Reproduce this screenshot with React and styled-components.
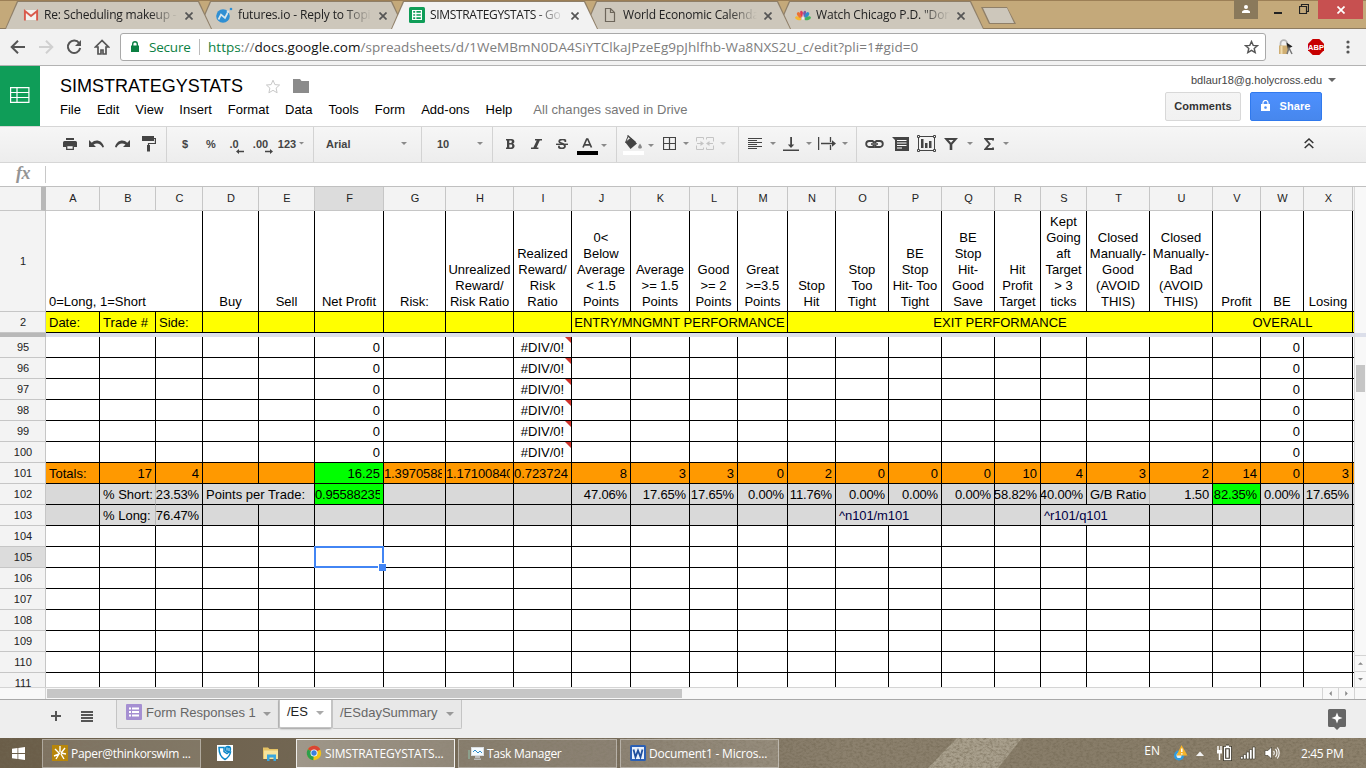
import React from "react";
import styled, { createGlobalStyle } from "styled-components";

const GlobalStyle = createGlobalStyle`
  body { margin: 0; background: #fff; font-family: "Liberation Sans", Arial, sans-serif; }
  * { box-sizing: border-box; }
  svg { display: block; flex: none; }
`;

const uiFont = `"Open Sans", "Noto Sans", sans-serif`;

const Screen = styled.div`
  width: 1366px;
  height: 768px;
  display: flex;
  flex-direction: column;
  overflow: hidden;
  white-space: nowrap;
`;

/* ---------- browser frame ---------- */

const TabStrip = styled.div`
  height: 29px;
  display: flex;
  align-items: flex-start;
  background: #c4a97a;
  border-top: 1px solid #9c7f56;
  border-bottom: 1px solid #8d7b60;
  padding-left: 5px;
  position: relative;
`;

const Tab = styled.div`
  width: 207px;
  height: 28px;
  margin-right: -14px;
  padding: 0 16px 0 18px;
  display: flex;
  align-items: center;
  position: relative;
  z-index: ${(p) => p.$z};
  isolation: isolate;
  font: 12px ${uiFont};
  color: #222;
  &::before, &::after { content: ""; position: absolute; inset: 0; z-index: -1; }
  &::before {
    background: #8f7f68;
    clip-path: polygon(0 100%, 12px 0, 194px 0, 100% 100%);
  }
  &::after {
    background: ${(p) => (p.$active ? "#f2f2f2" : "#cdc7bb")};
    clip-path: polygon(1px 100%, 13px 1px, 193px 1px, 206px 100%);
  }
`;

const TabTitle = styled.span`
  margin: -1px 0 0 5px;
  width: 135px;
  overflow: hidden;
  letter-spacing: ${(p) => p.$ls || 0}px;
  mask-image: linear-gradient(90deg, #000 105px, transparent 134px);
`;

const TabClose = styled.span`
  margin: 1px 0 0 6px;
`;

const NewTab = styled.div`
  width: 35px;
  height: 17px;
  margin: 6px 0 0 11px;
  background: #8f7f68;
  clip-path: polygon(0 0, 26px 0, 100% 100%, 8px 100%);
  &::after {
    content: "";
    display: block;
    height: 17px;
    background: #cdc7bb;
    clip-path: polygon(2px 1px, 26px 1px, 33px 16px, 9px 16px);
  }
`;

const WindowButtons = styled.div`
  display: flex;
  align-items: flex-start;
  margin-left: auto;
  margin-right: 3px;
  margin-top: -1px;
`;

const WindowButton = styled.div`
  width: ${(p) => p.$w}px;
  height: 19px;
  margin-left: ${(p) => p.$gap || 0}px;
  background: ${(p) => p.$bg || "transparent"};
  display: flex;
  align-items: center;
  justify-content: center;
`;

const AddressBar = styled.div`
  height: 37px;
  background: #f2f2f2;
  border-bottom: 1px solid #b3b3b3;
  display: flex;
  align-items: center;
  padding: 0 0 0 10px;
`;

const NavButton = styled.div`
  width: ${(p) => p.$w || 28}px;
  height: 28px;
  display: flex;
  align-items: center;
  justify-content: ${(p) => p.$align || "flex-start"};
`;

const UrlBox = styled.div`
  width: 1146px;
  height: 28px;
  margin-left: -2px;
  border: 1px solid #a9a9a9;
  border-radius: 3px;
  background: #fff;
  display: flex;
  align-items: center;
  padding: 0 6px 0 10px;
  font: 13.5px ${uiFont};
  color: #7d7d7d;
`;

const SecureLabel = styled.span`
  margin-left: 10px;
  width: 51px;
  border-right: 1px solid #bbb;
  color: #0b8043;
  line-height: 16px;
  letter-spacing: -0.2px;
`;

const Url = styled.span`
  margin-left: 8px;
  flex: 1;
  letter-spacing: 0.05px;
  b { font-weight: 400; color: #111; }
  i { font-style: normal; color: #0b8043; }
`;

/* ---------- document header ---------- */

const DocHeader = styled.header`
  height: 60px;
  display: flex;
  background: #fff;
`;

const SheetsLogo = styled.div`
  width: 40px;
  height: 60px;
  background: #0f9d58;
  display: flex;
  align-items: center;
  justify-content: center;
  padding-bottom: 2px;
`;

const DocInfo = styled.div`
  margin-left: 20px;
  flex: 1;
  padding-top: 10px;
`;

const TitleRow = styled.div`
  display: flex;
  align-items: center;
  height: 20px;
  gap: 12px;
`;

const DocTitle = styled.div`
  width: 193px;
  font-size: 18px;
  color: #000;
`;

const MenuBar = styled.nav`
  display: flex;
  gap: 16px;
  margin-top: 6px;
  font-size: 13px;
  line-height: 16px;
  color: #000;
`;

const SaveState = styled.span`
  margin-left: 5px;
  color: #777;
  letter-spacing: 0.04px;
`;

const Account = styled.div`
  width: 201px;
  padding: 7px 0 0;
`;

const Email = styled.div`
  display: flex;
  align-items: center;
  gap: 6px;
  margin-left: 26px;
  font-size: 11px;
  line-height: 14px;
  color: #444;
`;

const ButtonRow = styled.div`
  display: flex;
  gap: 9px;
  margin-top: 5px;
`;

const PushButton = styled.button`
  width: ${(p) => p.$w}px;
  height: 29px;
  padding: 0 0 2px;
  display: flex;
  align-items: center;
  justify-content: center;
  gap: 9px;
  border: 1px solid ${(p) => (p.$primary ? "#3079ed" : "#d8d8d8")};
  border-radius: 2px;
  background: ${(p) => (p.$primary ? "linear-gradient(#4d90fe, #4787ed)" : "linear-gradient(#f5f5f5, #f1f1f1)")};
  color: ${(p) => (p.$primary ? "#fff" : "#333")};
  font: bold 11px "Liberation Sans", Arial, sans-serif;
  letter-spacing: 0.1px;
`;

/* ---------- toolbar ---------- */

const Toolbar = styled.div`
  height: 37px;
  display: flex;
  border-top: 1px solid #d6d6d6;
  border-bottom: 1px solid #d6d6d6;
  background: linear-gradient(#f6f6f6, #ededed);
`;

const ToolGroup = styled.div`
  width: ${(p) => p.$w}px;
  flex: none;
  ${(p) => (p.$last ? "" : "border-right: 1px solid #d3d3d3;")}
  padding-left: ${(p) => p.$pad || 0}px;
  display: flex;
`;

const Tool = styled.div`
  width: ${(p) => p.$w || 26}px;
  flex: none;
  height: 35px;
  padding: ${(p) => p.$drop || 0}px 0 2px;
  display: flex;
  align-items: center;
  justify-content: ${(p) => p.$align || "center"};
  font: bold 11px "Liberation Sans", Arial, sans-serif;
  color: #444;
`;

const FormulaBar = styled.div`
  height: 24px;
  border-bottom: 1px solid #c0c0c0;
  display: flex;
  align-items: center;
`;

const FxLabel = styled.div`
  width: 46px;
  height: 17px;
  padding-left: 16px;
  border-right: 1px solid #c8c8c8;
  font: italic bold 18px/15px "Liberation Serif", serif;
  letter-spacing: -0.5px;
  color: #949494;
`;

/* ---------- grid ---------- */

const SheetArea = styled.div`
  height: 500px;
  display: flex;
`;

const GridBody = styled.div`
  width: 1354px;
  height: 500px;
  overflow: hidden;
`;

const ColumnHeaderRow = styled.div`
  display: flex;
  height: 24px;
`;

const CornerCell = styled.div`
  width: 46px;
  height: 24px;
  background: #f3f3f3;
  border-right: 5px solid #b8b8b8;
  border-bottom: 1px solid #c6c6c6;
`;

const ColumnHeader = styled.div`
  width: ${(p) => p.$w}px;
  border-right: ${(p) => (p.$w > 1 ? 1 : 0)}px solid #c6c6c6;
  border-bottom: 1px solid #c6c6c6;
  background: ${(p) => (p.$on ? "#dcdcdc" : "#f3f3f3")};
  padding-left: ${(p) => (p.$w > 1 ? 1 : 0)}px;
  font-size: 11px;
  line-height: 23px;
  text-align: center;
  color: #222;
  overflow: hidden;
`;

const Row = styled.div`
  display: flex;
  height: ${(p) => p.$h}px;
`;

const RowHeader = styled.div`
  width: 46px;
  flex: none;
  border-right: 1px solid #c6c6c6;
  border-bottom: 1px solid #c6c6c6;
  background: ${(p) => (p.$on ? "#dcdcdc" : "#f3f3f3")};
  padding-left: 1px;
  display: flex;
  align-items: center;
  justify-content: center;
  font-size: 11px;
  color: #222;
`;

const Cell = styled.div`
  width: ${(p) => p.$w}px;
  flex: none;
  background: ${(p) => p.$bg || "#fff"};
  border-right: ${(p) => (p.$w > 1 ? 1 : 0)}px solid ${(p) => (p.$soft ? "#b7b7b7" : "#000")};
  border-bottom: 1px solid #000;
  padding: 0 3px 1px ${(p) => (p.$tight ? 0 : 3)}px;
  display: flex;
  align-items: flex-end;
  justify-content: ${(p) => ({ right: "flex-end", center: "center" }[p.$align] || "flex-start")};
  text-align: ${(p) => p.$align || "left"};
  font-size: 13px;
  line-height: 16px;
  color: ${(p) => p.$color || "#000"};
  position: relative;
`;

const CellText = styled.span`
  white-space: pre;
  letter-spacing: ${(p) => p.$ls || 0}px;
  ${(p) => (p.$clip ? "overflow: hidden; width: 100%;" : "")}
`;

const ErrorMark = styled.i`
  position: absolute;
  top: 0;
  right: 0;
  border: 3px solid transparent;
  border-top-color: #d0342c;
  border-right-color: #d0342c;
`;

const Selection = styled.div`
  position: absolute;
  inset: -1px -1px -1px -1px;
  border: 2px solid #4285f4;
  z-index: 2;
  &::after {
    content: "";
    position: absolute;
    right: -4px;
    bottom: -5px;
    width: 7px;
    height: 7px;
    background: #4285f4;
    border: solid #fff;
    border-width: 1px 0 0 1px;
  }
`;

const FreezeBar = styled.div`
  height: 4px;
  border-left: 46px solid #b8b8b8;
  background: #dcdfea;
`;

const VerticalScroll = styled.div`
  width: 12px;
  height: 500px;
  border-left: 1px solid #d9d9d9;
  background: #f8f8f8;
  display: flex;
  flex-direction: column;
`;

const ScrollFreeze = styled.div`
  margin-top: 146px;
  height: 4px;
  background: #dcdfea;
`;

const VerticalThumb = styled.div`
  margin: 28px 1px 0;
  height: 27px;
  background: #c6c6c6;
`;

const ScrollButton = styled.div`
  width: ${(p) => p.$w}px;
  height: ${(p) => p.$h}px;
  border: 0 solid #d4d4d4;
  ${(p) => (p.$side ? "border-left-width: 1px;" : "border-top-width: 1px;")}
  margin-top: ${(p) => (p.$push ? "auto" : 0)};
  display: flex;
  align-items: center;
  justify-content: center;
`;

const HorizontalScroll = styled.div`
  height: 13px;
  display: flex;
  border-top: 1px solid #d4d4d4;
  border-bottom: 1px solid #a8a8a8;
  background: #f8f8f8;
`;

const HorizontalThumb = styled.div`
  width: 635px;
  height: 9px;
  margin: 1px auto 0 1px;
  background: #c6c6c6;
`;

const ScrollGutter = styled.div`
  width: 46px;
  border-right: 1px solid #d4d4d4;
`;

/* ---------- sheet tabs ---------- */

const SheetBar = styled.div`
  height: 38px;
  background: #eeeeee;
  display: flex;
  align-items: flex-start;
  position: relative;
`;

const SheetTools = styled.div`
  width: 116px;
  height: 32px;
  display: flex;
  align-items: center;
  gap: 20px;
  padding-left: 51px;
`;

const SheetTab = styled.div`
  width: ${(p) => p.$w}px;
  height: ${(p) => (p.$active ? 28 : 29)}px;
  border: 1px solid #c4c4c4;
  border-top: 0;
  border-radius: 0 0 2px 2px;
  background: ${(p) => (p.$active ? "#fff" : "#e8e8e8")};
  box-shadow: ${(p) => (p.$active ? "0 1px 2px rgba(0,0,0,.35)" : "none")};
  color: ${(p) => (p.$active ? "#222" : "#666")};
  font-size: 13px;
  display: flex;
  align-items: center;
  gap: 4px;
  padding: 0 7px 4px ${(p) => p.$pad || 7}px;
`;

const SheetMenu = styled.span`
  margin: 3px 0 0 auto;
`;

const Explore = styled.div`
  margin: 9px 20px 0 auto;
`;

/* ---------- taskbar ---------- */

const Taskbar = styled.footer`
  height: 30px;
  position: relative;
  isolation: isolate;
  display: flex;
  align-items: center;
  background: linear-gradient(90deg, #6a5d48 0, #736754 25%, #7b705f 45%, #8c816e 62%, #887d69 80%, #8d816c 100%);
  font: 12px ${uiFont};
  color: #fff;
`;

const Texture = styled.svg`
  position: absolute;
  inset: 0;
  z-index: -1;
`;

const StartButton = styled.div`
  width: 42px;
  padding-left: 12px;
`;

const TaskButton = styled.div`
  width: 159px;
  height: 29px;
  margin-right: ${(p) => p.$gap || 3}px;
  padding-left: 9px;
  display: flex;
  align-items: center;
  gap: 3px;
  border: 1px solid ${(p) => (p.$active ? "rgba(255,255,255,.85)" : "rgba(255,255,255,.38)")};
  background: ${(p) => (p.$active ? "linear-gradient(90deg, rgba(255,255,255,.32), rgba(255,255,255,.2))" : "rgba(255,255,255,.13)")};
  letter-spacing: ${(p) => p.$ls || 0}px;
`;

const PinnedApp = styled.div`
  width: 46px;
  margin-right: ${(p) => p.$gap || 0}px;
  display: flex;
  justify-content: center;
`;

const Tray = styled.div`
  margin-left: auto;
  padding-right: 22px;
  display: flex;
  align-items: center;
`;

const Language = styled.span`
  margin: -5px 13px 0 0;
`;

const Clock = styled.span`
  margin-left: 20px;
  width: 43px;
  letter-spacing: -0.35px;
`;

/* ---------- drawings ---------- */

const Caret = ({ color = "#8a8a8a", w = 6 }) => (
  <svg width={w} height={w / 2} viewBox="0 0 6 3"><path d="M0 0h6L3 3z" fill={color} /></svg>
);

const Cross = ({ color = "#555", s = 8 }) => (
  <svg width={s} height={s} viewBox="0 0 8 8"><path d="M.500.500l7 7M7.500.500l-7 7" stroke={color} strokeWidth="1.700" /></svg>
);

const tabIcons = {
  mail: (
    <svg width="16" height="16" viewBox="0 0 16 16">
      <path d="M2 3h12v10H2z" fill="#f3f1ee" />
      <path d="M1.900 13.500V4L8 9l6.100-5v9.500" fill="none" stroke="#d9594b" strokeWidth="1.900" />
    </svg>
  ),
  futures: (
    <svg width="17" height="16" viewBox="0 0 17 16">
      <circle cx="7" cy="9" r="6.800" fill="#2f8fd3" />
      <path d="M2.500 12.500l2.500-5 4 3.500L11.500 6" fill="none" stroke="#d9e6ec" strokeWidth="1.700" />
      <circle cx="15" cy="2" r="1.300" fill="#2f8fd3" />
      <circle cx="12" cy="4.800" r="1.300" fill="#d9e6ec" />
    </svg>
  ),
  sheets: (
    <svg width="16" height="16" viewBox="0 0 16 16">
      <rect width="16" height="16" rx="1.500" fill="#0f9d58" />
      <path d="M3 3h10v10H3z" fill="#fff" />
      <path d="M4.200 4.800h2M7.400 4.800h4.400M4.200 8h2M7.400 8h4.400M4.200 11.200h2M7.400 11.200h4.400" stroke="#0f9d58" strokeWidth="1.700" />
    </svg>
  ),
  page: (
    <svg width="16" height="16" viewBox="0 0 16 16">
      <path d="M3.500 1.500h5l4 4v9h-9zM8.500 1.500v4h4" fill="none" stroke="#6d665b" strokeWidth="1.200" />
    </svg>
  ),
  peacock: (
    <svg width="16" height="16" viewBox="0 0 16 16">
      <ellipse cx="3.200" cy="11.300" rx="3.200" ry="1.700" transform="rotate(20 3.200 11.300)" fill="#f5b731" />
      <ellipse cx="4.300" cy="8" rx="3.200" ry="1.800" transform="rotate(55 4.300 8)" fill="#ec7234" />
      <ellipse cx="6.800" cy="6.800" rx="3.200" ry="1.500" transform="rotate(78 6.800 6.800)" fill="#df3a55" />
      <ellipse cx="9.400" cy="6.800" rx="3.200" ry="1.500" transform="rotate(102 9.400 6.800)" fill="#7b57a5" />
      <ellipse cx="11.800" cy="8" rx="3.200" ry="1.800" transform="rotate(125 11.800 8)" fill="#2f8ccc" />
      <ellipse cx="12.800" cy="11.300" rx="3.200" ry="1.700" transform="rotate(-20 12.800 11.300)" fill="#45b25b" />
      <path d="M8 6l1.200 6.500H6.900z" fill="#eee" />
    </svg>
  ),
};

const tools = {
  print: (
    <svg width="14" height="12" viewBox="0 0 14 12" fill="#444">
      <path d="M3 0h8v2H3zM1.500 3h11A1.500 1.500 0 0 1 14 4.500V9h-3V7H3v2H0V4.500A1.500 1.500 0 0 1 1.500 3z" />
      <path d="M3.700 7.700h6.600v3.600H3.700z" fill="#fafafa" stroke="#444" strokeWidth="1.300" />
    </svg>
  ),
  undo: (
    <svg width="15" height="8" viewBox="0 0 15 8"><path d="M0 0v7h7L4.500 4.500C7.500 2.500 11.500 3 13.500 7.500L15 7C13 0 6.500-1 2.800 2.800z" fill="#444" /></svg>
  ),
  redo: (
    <svg width="15" height="8" viewBox="0 0 15 8"><path d="M15 0v7H8l2.500-2.500C7.500 2.500 3.500 3 1.500 7.500L0 7C2 0 8.500-1 12.200 2.800z" fill="#444" /></svg>
  ),
  paint: (
    <svg width="14" height="16" viewBox="0 0 14 16"><path d="M0 0h12v5H0z" fill="#444" /><path d="M12 2.500h1.400v5H6.500V10" fill="none" stroke="#444" strokeWidth="1.200" /><path d="M5 9h3v6.500H5z" fill="#444" /></svg>
  ),
  arrowLeft: (
    <svg width="8" height="5" viewBox="0 0 8 5"><path d="M0 2.500L3 0v1.700h5v1.600H3V5z" fill="#444" /></svg>
  ),
  arrowRight: (
    <svg width="8" height="5" viewBox="0 0 8 5"><path d="M8 2.500L5 0v1.700H0v1.600h5V5z" fill="#444" /></svg>
  ),
  bold: (
    <svg width="9" height="10" viewBox="0 0 9 10"><path fillRule="evenodd" d="M0 0h5.500C9 0 9 4 7 4.700 9.500 5.500 9 10 5.500 10H0V8.600h1V1.400H0zM3.300 1.600v2.300h1.500c1.400 0 1.400-2.300 0-2.300zM3.300 5.500v2.900h1.800c1.500 0 1.500-2.900 0-2.900z" fill="#444" /></svg>
  ),
  italic: (
    <svg width="11" height="10" viewBox="0 0 11 10"><path d="M4 0h7v1.600H8.800L5.600 8.400H7.400V10H0V8.400h2.400l3.300-6.800H4z" fill="#444" /></svg>
  ),
  strike: (
    <svg width="12" height="10" viewBox="0 0 12 10"><path d="M9.300 3V1.200C7-.1 3.200.3 3.200 2.400S8.800 4.300 9 7.200C9 9.800 4.600 9.700 3 8.500V6.800" fill="none" stroke="#444" strokeWidth="1.800" /><path d="M0 4.600h12v1.400H0z" fill="#444" /></svg>
  ),
  textColor: (
    <svg width="21" height="17" viewBox="0 0 21 17"><path d="M6 9.500L9.700 1h1l3.800 8.500M7.500 6.800h5.500" fill="none" stroke="#444" strokeWidth="1.700" /><path d="M0 13h21v4H0z" fill="#000" /></svg>
  ),
  fill: (
    <svg width="21" height="20" viewBox="0 0 21 20"><path d="M2.500 7.500L8 3l6 5.500-6.500 5.500z" fill="#444" /><path d="M4.500.500l8 7" stroke="#444" strokeWidth="1.500" /><path d="M5 1.500L2.500 7.500l5-4" fill="none" stroke="#444" /><path d="M17 8.500c2.500 3.500 2.500 5 0 5s-2.500-1.500 0-5z" fill="#888" /><path d="M0 16h21v4H0z" fill="#fff" /></svg>
  ),
  borders: (
    <svg width="13" height="13" viewBox="0 0 13 13"><path d="M.500.500h12v12H.500zM6.500 0v13M0 6.500h13" fill="none" stroke="#444" strokeWidth="1.200" /></svg>
  ),
  merge: (
    <svg width="18" height="13" viewBox="0 0 18 13"><path d="M7.500 2.500v-2H.500v4M.500 8.500v4h7v-2M10.500 2.500v-2h7v4M17.500 8.500v4h-7v-2M1 6.500h4M17 6.500h-4" fill="none" stroke="#c4c4c4" /><path d="M4.500 4l3.500 2.500L4.500 9zM13.500 4L10 6.500 13.500 9z" fill="#c4c4c4" /></svg>
  ),
  align: (
    <svg width="14" height="11" viewBox="0 0 14 11"><path d="M0 .500h14M0 2.500h9M0 4.500h14M0 6.500h9M0 8.500h14M0 10.500h9" stroke="#444" strokeWidth="1.100" /></svg>
  ),
  valign: (
    <svg width="16" height="14" viewBox="0 0 16 14"><path d="M7.200 0h1.800v7.500h2.300L8 11 4.800 7.500h2.400zM0 12.500h16V14H0z" fill="#444" /></svg>
  ),
  wrap: (
    <svg width="19" height="13" viewBox="0 0 19 13"><path d="M.600 0v13" stroke="#444" strokeWidth="1.300" /><path d="M12.500 0v5M12.500 8v5" stroke="#444" strokeWidth="1.300" /><path d="M3 5.700h11V3.300l4 3.200-4 3.200V7.300H3z" fill="#444" /></svg>
  ),
  link: (
    <svg width="19" height="8" viewBox="0 0 19 8"><path d="M8.500 1H4.200a3 3 0 0 0 0 6h4.300V5M8.500 3V1M10.500 1h4.300a3 3 0 0 1 0 6h-4.300V5M10.500 3V1" fill="none" stroke="#444" strokeWidth="1.900" /><path d="M6 4h7" stroke="#444" strokeWidth="1.600" /></svg>
  ),
  comment: (
    <svg width="17" height="14" viewBox="0 0 17 14"><path d="M0 0h17v14H3V3z" fill="#444" /><path d="M5 3.500h9.500M5 6h9.500M5 8.500h9.500M5 11h5" stroke="#fff" /></svg>
  ),
  chart: (
    <svg width="19" height="17" viewBox="0 0 19 17"><path d="M1.500 1.500h16v14h-16z" fill="none" stroke="#444" /><path d="M4 4h2.500v9H4zM8 8h2.500v5H8zM12 6h2.500v7H12z" fill="#444" /><g fill="#f4f4f4" stroke="#444"><path d="M.500.500h2v2h-2zM16.500.500h2v2h-2zM.500 14.500h2v2h-2zM16.500 14.500h2v2h-2z" /></g></svg>
  ),
  filter: (
    <svg width="14" height="12" viewBox="0 0 14 12"><path fillRule="evenodd" d="M0 0h14L8.300 6.500V12H5.700V6.500zM4.500 2L7 4.800 9.500 2z" fill="#444" /></svg>
  ),
  sigma: (
    <svg width="10" height="12" viewBox="0 0 10 12"><path d="M9 2.500V1H1.500l4.200 5-4.200 5H9V9.500" fill="none" stroke="#444" strokeWidth="1.900" /></svg>
  ),
  collapse: (
    <svg width="10" height="11" viewBox="0 0 10 11"><path d="M.700 5L5 1l4.300 4M.700 10L5 6l4.300 4" fill="none" stroke="#333" strokeWidth="1.500" /></svg>
  ),
};

const ToolText = styled.span`
  display: flex;
  flex-direction: column;
  align-items: flex-end;
  line-height: 11px;
  margin-top: 5px;
  svg { margin: -1px -5px 0 0; }
`;

/* ---------- data ---------- */

const widths = [54, 56, 47, 56, 56, 69, 62, 68, 58, 59, 59, 48, 50, 48, 53, 53, 53, 46, 46, 63, 63, 48, 43, 49, 1];
const letters = "ABCDEFGHIJKLMNOPQRSTUVWX".split("").concat("");
const yellow = "#ffff00";
const orange = "#ff9900";
const gray = "#d9d9d9";
const green = "#00ff00";

const headerTexts = [
  { t: "0=Long, 1=Short", span: 3, align: "left" },
  "Buy", "Sell", "Net Profit", "Risk:",
  "Unrealized\nReward/\nRisk Ratio",
  "Realized\nReward/\nRisk\nRatio",
  "0<\nBelow\nAverage\n< 1.5\nPoints",
  "Average\n>= 1.5\nPoints",
  "Good\n>= 2\nPoints",
  "Great\n>=3.5\nPoints",
  "Stop\nHit",
  "Stop\nToo\nTight",
  "BE\nStop\nHit- Too\nTight",
  "BE\nStop\nHit-\nGood\nSave",
  "Hit\nProfit\nTarget",
  "Kept\nGoing\naft\nTarget\n> 3\nticks",
  "Closed\nManually-\nGood\n(AVOID\nTHIS)",
  "Closed\nManually-\nBad\n(AVOID\nTHIS)",
  "Profit", "BE", "Losing", "",
].map((c) => (typeof c === "string" ? { t: c, align: "center" } : c));

const labelCells = [
  { t: "Date:" }, { t: "Trade #", ls: 0.1 }, { t: "Side:" },
  {}, {}, {}, {}, {}, {},
  { t: "ENTRY/MNGMNT PERFORMANCE", span: 4, align: "center" },
  { t: "EXIT PERFORMANCE", span: 8, align: "center" },
  { t: "OVERALL", span: 3, align: "center" },
  {},
].map((c) => ({ ...c, bg: yellow }));

const emptyRow = () => widths.map(() => ({}));

const entryRow = () => {
  const cells = emptyRow();
  cells[5] = { t: "0", align: "right" };
  cells[8] = { t: "#DIV/0!", align: "center", error: true };
  cells[22] = { t: "0", align: "right" };
  return cells;
};

const num = (t, extra) => ({ t, align: "right", bg: orange, ...extra });
const pct = (t, extra) => ({ t, align: "right", bg: gray, ls: -0.15, ...extra });
const blank = (n, bg) => Array.from({ length: n }, () => ({ bg }));

const totals = [
  { t: "Totals:", bg: orange }, num("17"), num("4"), ...blank(2, orange),
  num("16.25", { bg: green }),
  { t: "1.3970588", bg: orange, clip: true, ls: -0.12 },
  { t: "1.17100840", bg: orange, clip: true, ls: -0.12 },
  { t: "0.723724", bg: orange, clip: true, ls: -0.05 },
  ...["8", "3", "3", "0", "2", "0", "0", "0", "10", "4", "3", "2", "14", "0", "3"].map((t) => num(t)),
  { bg: orange },
];

const shortRow = [
  { bg: gray }, { t: "% Short:", bg: gray, soft: true }, pct("23.53%"),
  { t: "Points per Trade:", span: 2, bg: gray },
  { t: "0.95588235", bg: green, clip: true, ls: -0.2 },
  ...blank(3, gray),
  pct("47.06%"), pct("17.65%"), pct("17.65%"), pct("0.00%"), pct("11.76%"), pct("0.00%"),
  pct("0.00%"), pct("0.00%"), pct("58.82%"), pct("40.00%"),
  { t: "G/B Ratio", bg: gray, soft: true }, pct("1.50"), pct("82.35%", { bg: green }),
  pct("0.00%"), pct("17.65%"), { bg: gray },
];

const longRow = [
  { bg: gray }, { t: "% Long:", bg: gray, soft: true }, pct("76.47%"),
  ...blank(11, gray),
  { t: "^n101/m101", span: 2, bg: gray, color: "#000044", ls: -0.1 },
  ...blank(2, gray),
  { t: "^r101/q101", span: 2, bg: gray, color: "#000044", ls: -0.1 },
  ...blank(5, gray),
];

const bodyRows = Array.from({ length: 17 }, (_, i) => {
  const n = 95 + i;
  if (n <= 100) return { n, cells: entryRow() };
  if (n === 101) return { n, cells: totals };
  if (n === 102) return { n, cells: shortRow };
  if (n === 103) return { n, cells: longRow };
  const cells = emptyRow();
  if (n === 105) cells[5] = { selected: true };
  return { n, cells };
});

function SheetRow({ n, h = 21, cells }) {
  let col = 0;
  return (
    <Row $h={h}>
      <RowHeader $on={n === 105}>{n}</RowHeader>
      {cells.map((c, i) => {
        const span = c.span || 1;
        const w = widths.slice(col, col + span).reduce((a, b) => a + b, 0);
        col += span;
        return (
          <Cell key={i} $w={w} $bg={c.bg} $align={c.align} $soft={c.soft} $tight={c.clip} $color={c.color}>
            {c.t && <CellText $ls={c.ls} $clip={c.clip}>{c.t}</CellText>}
            {c.error && <ErrorMark />}
            {c.selected && <Selection />}
          </Cell>
        );
      })}
    </Row>
  );
}

const browserTabs = [
  { icon: "mail", title: "Re: Scheduling makeup -", ls: -0.2 },
  { icon: "futures", title: "futures.io - Reply to Topi", ls: -0.15 },
  { icon: "sheets", title: "SIMSTRATEGYSTATS - Go", ls: -0.35, active: true },
  { icon: "page", title: "World Economic Calenda", ls: -0.15 },
  { icon: "peacock", title: 'Watch Chicago P.D. "Don', ls: -0.15 },
];

export default function App() {
  return (
    <>
      <GlobalStyle />
      <Screen>
        <TabStrip>
          {browserTabs.map((t, i) => (
            <Tab key={t.icon} $active={t.active} $z={t.active ? 9 : 5 - i}>
              {tabIcons[t.icon]}
              <TabTitle $ls={t.ls}>{t.title}</TabTitle>
              <TabClose><Cross color="#555" /></TabClose>
            </Tab>
          ))}
          <NewTab />
          <WindowButtons>
            <WindowButton $w={24} $bg="#8a795b">
              <svg width="8" height="10" viewBox="0 0 8 10" fill="#fff"><circle cx="4" cy="2" r="2" /><path d="M0 8V7C0 4.400 8 4.400 8 7v1z" /></svg>
            </WindowButton>
            <WindowButton $w={24} $gap={8}>
              <svg width="8" height="8" viewBox="0 0 8 8"><path d="M0 6h8v2H0z" fill="#222" /></svg>
            </WindowButton>
            <WindowButton $w={24} $gap={2}>
              <svg width="10" height="11" viewBox="0 0 10 11"><path d="M2.500 2V.500h7v7H8M.500 2.500h7v7h-7z" fill="none" stroke="#222" strokeWidth="1.200" /></svg>
            </WindowButton>
            <WindowButton $w={45} $gap={2} $bg="#c75050">
              <Cross color="#fff" />
            </WindowButton>
          </WindowButtons>
        </TabStrip>

        <AddressBar>
          <NavButton>
            <svg width="16" height="14" viewBox="0 0 16 14"><path d="M15 7H2M8 .800L1.700 7 8 13.200" fill="none" stroke="#555" strokeWidth="2" /></svg>
          </NavButton>
          <NavButton>
            <svg width="16" height="14" viewBox="0 0 16 14"><path d="M1 7h13M8 .800L14.300 7 8 13.200" fill="none" stroke="#d0d0d0" strokeWidth="2" /></svg>
          </NavButton>
          <NavButton>
            <svg width="16" height="16" viewBox="0 0 16 16"><path d="M13.200 4.200A6.200 6.200 0 1 0 14.200 9" fill="none" stroke="#555" strokeWidth="2" /><path d="M15 1v6H9z" fill="#555" /></svg>
          </NavButton>
          <NavButton>
            <svg width="16" height="16" viewBox="0 0 16 16"><path d="M8 1.500L1.500 8H4v7h3v-4h2v4h3V8h2.500z" fill="none" stroke="#555" strokeWidth="1.700" /></svg>
          </NavButton>
          <UrlBox>
            <svg width="8" height="12" viewBox="0 0 8 12"><path d="M0 4.500h8V11H0z" fill="#0b8043" /><path d="M1.700 5V3a2.300 2.300 0 0 1 4.600 0v2" fill="none" stroke="#0b8043" strokeWidth="1.400" /></svg>
            <SecureLabel>Secure</SecureLabel>
            <Url><i>https</i>://<b>docs.google.com</b>/spreadsheets/d/1WeMBmN0DA4SiYTClkaJPzeEg9pJhlfhb-Wa8NXS2U_c/edit?pli=1#gid=0</Url>
            <svg width="15" height="14" viewBox="0 0 15 14"><path d="M7.500 1.500l1.700 3.900 4.200.300-3.200 2.800 1 4.100-3.700-2.200-3.700 2.200 1-4.100L1.600 5.700l4.200-.300z" fill="none" stroke="#555" strokeWidth="1.400" /></svg>
          </UrlBox>
          <NavButton $align="flex-end">
            <svg width="16" height="16" viewBox="0 0 16 16"><path d="M2.500 7V4.500a3.300 3.300 0 0 1 6.600 0V7" fill="none" stroke="#b5b5b5" strokeWidth="1.700" /><path d="M1 6.500h9V15H1z" fill="#cfae73" /><path d="M3.500 7v8" stroke="#f0dcae" strokeWidth="2" /><path d="M8.500 3.500l6 4-3 1.500-1.500 2z" fill="#222" /><path d="M9 15l2-6 3 6" fill="none" stroke="#777" strokeWidth="1.500" /></svg>
          </NavButton>
          <NavButton $align="flex-end" $w={30}>
            <svg width="16" height="16" viewBox="0 0 16 16"><path d="M4.700 0h6.600L16 4.700v6.600L11.300 16H4.700L0 11.300V4.700z" fill="#c70000" /><text x="8" y="10.800" textAnchor="middle" fontFamily="Liberation Sans" fontWeight="700" fontSize="7.500" fill="#fff">ABP</text></svg>
          </NavButton>
          <NavButton $align="flex-end" $w={26}>
            <svg width="4" height="14" viewBox="0 0 4 14" fill="#555"><circle cx="2" cy="2" r="1.600" /><circle cx="2" cy="7" r="1.600" /><circle cx="2" cy="12" r="1.600" /></svg>
          </NavButton>
        </AddressBar>

        <DocHeader>
          <SheetsLogo>
            <svg width="20" height="16" viewBox="0 0 20 16"><path d="M.600.600h18.300v14.800H.600zM0 5.500h19M0 10.500h19M7 0v16" fill="none" stroke="#fff" strokeWidth="1.200" /></svg>
          </SheetsLogo>
          <DocInfo>
            <TitleRow>
              <DocTitle>SIMSTRATEGYSTATS</DocTitle>
              <svg width="16" height="15" viewBox="0 0 16 15"><path d="M8 1.200l1.900 4.400 4.700.400-3.500 3.100 1 4.700L8 11.300l-4.100 2.500 1-4.700L1.400 6l4.700-.400z" fill="none" stroke="#c8c8c8" /></svg>
              <svg width="16" height="14" viewBox="0 0 16 14"><path d="M0 0h7l1.500 2H16v12H0z" fill="#8b8b8b" /></svg>
            </TitleRow>
            <MenuBar>
              {["File", "Edit", "View", "Insert", "Format", "Data", "Tools", "Form", "Add-ons", "Help"].map((m) => <span key={m}>{m}</span>)}
              <SaveState>All changes saved in Drive</SaveState>
            </MenuBar>
          </DocInfo>
          <Account>
            <Email>bdlaur18@g.holycross.edu <Caret color="#666" w={8} /></Email>
            <ButtonRow>
              <PushButton $w={76}>Comments</PushButton>
              <PushButton $w={72} $primary>
                <svg width="9" height="11" viewBox="0 0 9 11"><path fillRule="evenodd" d="M0 4h9v7H0zM4.500 6.200a1.300 1.300 0 1 0 .01 0z" fill="#fff" /><path d="M2 4.500V3a2.500 2.500 0 0 1 5 0v1.500" fill="none" stroke="#fff" strokeWidth="1.200" /></svg>
                Share
              </PushButton>
            </ButtonRow>
          </Account>
        </DocHeader>

        <Toolbar>
          <ToolGroup $w={167} $pad={57}>
            <Tool>{tools.print}</Tool><Tool>{tools.undo}</Tool><Tool>{tools.redo}</Tool><Tool $w={27}>{tools.paint}</Tool>
          </ToolGroup>
          <ToolGroup $w={147} $pad={5}>
            <Tool>$</Tool><Tool>%</Tool>
            <Tool $w={20}><ToolText>.0{tools.arrowLeft}</ToolText></Tool>
            <Tool $w={33}><ToolText>.00{tools.arrowRight}</ToolText></Tool>
            <Tool $w={20}>123</Tool><Tool $w={8}><Caret w={5} /></Tool>
          </ToolGroup>
          <ToolGroup $w={108} $pad={12}><Tool $w={74} $align="flex-start">Arial</Tool><Tool $w={8}><Caret /></Tool></ToolGroup>
          <ToolGroup $w={71} $pad={15}><Tool $w={39} $align="flex-start">10</Tool><Tool $w={8}><Caret /></Tool></ToolGroup>
          <ToolGroup $w={124} $pad={4}>
            <Tool>{tools.bold}</Tool><Tool>{tools.italic}</Tool><Tool>{tools.strike}</Tool>
            <Tool $w={25} $drop={5}>{tools.textColor}</Tool><Tool $w={8} $drop={3}><Caret /></Tool>
          </ToolGroup>
          <ToolGroup $w={122} $pad={5}>
            <Tool $w={23} $drop={3}>{tools.fill}</Tool><Tool $w={12} $drop={3}><Caret /></Tool>
            <Tool $w={24}>{tools.borders}</Tool><Tool $w={10}><Caret /></Tool>
            <Tool $w={28}>{tools.merge}</Tool><Tool $w={8}><Caret color="#c8c8c8" /></Tool>
          </ToolGroup>
          <ToolGroup $w={118} $pad={3}>
            <Tool>{tools.align}</Tool><Tool $w={9}><Caret /></Tool>
            <Tool $w={28}>{tools.valign}</Tool><Tool $w={7}><Caret /></Tool>
            <Tool $w={30}>{tools.wrap}</Tool><Tool $w={6}><Caret /></Tool>
          </ToolGroup>
          <ToolGroup $w={509} $pad={4} $last>
            <Tool>{tools.link}</Tool><Tool $w={27}>{tools.comment}</Tool><Tool $w={24}>{tools.chart}</Tool>
            <Tool $w={25}>{tools.filter}</Tool><Tool $w={13}><Caret /></Tool>
            <Tool $w={26}>{tools.sigma}</Tool><Tool $w={8}><Caret /></Tool>
            <Tool $w={304} $align="flex-end">{tools.collapse}</Tool>
          </ToolGroup>
        </Toolbar>

        <FormulaBar><FxLabel>fx</FxLabel></FormulaBar>

        <SheetArea>
          <GridBody>
            <ColumnHeaderRow>
              <CornerCell />
              {letters.map((l, i) => <ColumnHeader key={i} $w={widths[i]} $on={l === "F"}>{l}</ColumnHeader>)}
            </ColumnHeaderRow>
            <SheetRow n={1} h={101} cells={headerTexts} />
            <SheetRow n={2} cells={labelCells} />
            <FreezeBar />
            {bodyRows.map((r) => <SheetRow key={r.n} {...r} />)}
          </GridBody>
          <VerticalScroll>
            <ScrollFreeze />
            <VerticalThumb />
            <ScrollButton $w={11} $h={16} $push>
              <svg width="5" height="3" viewBox="0 0 6 3"><path d="M0 3h6L3 0z" fill="#888" /></svg>
            </ScrollButton>
            <ScrollButton $w={11} $h={16}><Caret w={5} color="#888" /></ScrollButton>
          </VerticalScroll>
        </SheetArea>
        <HorizontalScroll>
          <ScrollGutter />
          <HorizontalThumb />
          <ScrollButton $side $w={16} $h={11}><svg width="3" height="5" viewBox="0 0 3 6"><path d="M3 0v6L0 3z" fill="#888" /></svg></ScrollButton>
          <ScrollButton $side $w={16} $h={11}><svg width="3" height="5" viewBox="0 0 3 6"><path d="M0 0v6l3-3z" fill="#888" /></svg></ScrollButton>
          <ScrollButton $side $w={12} $h={11} />
        </HorizontalScroll>

        <SheetBar>
          <SheetTools>
            <svg width="10" height="10" viewBox="0 0 10 10"><path d="M4 0h2v4h4v2H6v4H4V6H0V4h4z" fill="#555" /></svg>
            <svg width="12" height="11" viewBox="0 0 12 11"><path d="M0 0h12v2H0zM0 3h12v2H0zM0 6h12v2H0zM0 9h12v2H0z" fill="#555" /></svg>
          </SheetTools>
          <SheetTab $w={163} $pad={9}>
            <svg width="16" height="16" viewBox="0 0 16 16"><rect width="16" height="16" rx="1" fill="#a58fd2" /><path d="M3 4.500h2M6 4.500h7M3 8h2M6 8h7M3 11.500h2M6 11.500h7" stroke="#fff" strokeWidth="1.900" /></svg>
            <span>Form Responses 1</span><SheetMenu><Caret w={8} color="#999" /></SheetMenu>
          </SheetTab>
          <SheetTab $w={53} $active><span>/ES</span><SheetMenu><Caret w={8} color="#aaa" /></SheetMenu></SheetTab>
          <SheetTab $w={130}><span>/ESdaySummary</span><SheetMenu><Caret w={8} color="#999" /></SheetMenu></SheetTab>
          <Explore>
            <svg width="18" height="21" viewBox="0 0 18 21"><path d="M1.500 0h15A1.500 1.500 0 0 1 18 1.500v15a1.500 1.500 0 0 1-1.500 1.500H12l-3 3-3-3H1.500A1.500 1.500 0 0 1 0 16.500v-15A1.500 1.500 0 0 1 1.500 0z" fill="#666" /><path d="M9 3.500l1.500 4 4 1.500-4 1.500-1.500 4-1.500-4-4-1.500 4-1.500z" fill="#fff" /></svg>
          </Explore>
        </SheetBar>

        <Taskbar>
          <Texture width="1366" height="30">
            <filter id="grain" x="0" y="0" width="100%" height="100%">
              <feTurbulence type="fractalNoise" baseFrequency="0.3 0.5" numOctaves="3" seed="4" />
              <feColorMatrix values="0 0 0 0 0.16  0 0 0 0 0.13  0 0 0 0 0.08  1.3 0 0 0 -0.5" />
            </filter>
            <path d="M957 0h65l-24 30h-70z" fill="#b3ab98" opacity=".75" />
            <rect width="1366" height="30" filter="url(#grain)" />
          </Texture>
          <StartButton>
            <svg width="13" height="13" viewBox="0 0 13 13" fill="#fff"><path d="M0 1.800L5.500 1v5H0zM6.300.900L13 0v6H6.300zM0 6.900h5.500v5L0 11.200zM6.300 6.900H13V13l-6.700-.900z" /></svg>
          </StartButton>
          <TaskButton $gap={1} $ls={-0.3}>
            <svg width="16" height="16" viewBox="0 0 16 16"><rect width="16" height="16" fill="#b8860b" /><path d="M8 7V1M8 9l-5-5M9 8l4-5M9 8l5 1M7 9l-5 2M7 9l-3 5M9 9l3 5" stroke="#fff" strokeWidth="1.400" /></svg>
            Paper@thinkorswim ...
          </TaskButton>
          <PinnedApp>
            <svg width="16" height="16" viewBox="0 0 16 16"><rect width="16" height="16" fill="#fff" /><path d="M2 2.500h5v4l3 2 2-1.500 1.500 0C13 11 10.500 13 8 14.500 4 12.500 2 9 2 2.500z" fill="none" stroke="#0a86c8" strokeWidth="1.500" /><circle cx="11" cy="4" r="3.200" fill="#0a86c8" /><path d="M10 2.500v3M12 3v3" stroke="#fff" strokeWidth=".8" /></svg>
          </PinnedApp>
          <PinnedApp $gap={2}>
            <svg width="16" height="16" viewBox="0 0 16 16"><path d="M0 2.500h5l1.500 1.500H15V14H0z" fill="#e5c264" /><path d="M1 5.500h14V14H1z" fill="#f7e39b" /><path d="M4 16V9.500h9V16h-2.500v-3.500h-4V16z" fill="#3aa7dd" /></svg>
          </PinnedApp>
          <TaskButton $active $ls={-0.13}>
            <svg width="16" height="16" viewBox="0 0 16 16"><circle cx="8" cy="8" r="7.200" fill="#f2c315" /><path d="M8 8L1.800 4.300A7.200 7.200 0 0 1 14.200 4.500z" fill="#d94434" /><path d="M8 8L1.800 4.300a7.200 7.200 0 0 0 5.500 10.900z" fill="#2c9f4b" /><path d="M8 .800a7.200 7.200 0 0 1 6.200 3.700H8z" fill="#d94434" /><circle cx="8" cy="8" r="3.500" fill="#fff" /><circle cx="8" cy="8" r="2.700" fill="#3d7fdc" /></svg>
            SIMSTRATEGYSTATS...
          </TaskButton>
          <TaskButton $ls={-0.3}>
            <svg width="16" height="16" viewBox="0 0 16 16"><path d="M3 2h13v9H3z" fill="#d9dde0" /><path d="M4 3h11v7H4z" fill="#f5fbff" /><path d="M5 7l2-2 3 3 2-2 2 2" fill="none" stroke="#2e8bc8" /><path d="M7 11h5v2H7zM6 13.500h7V15H6z" fill="#bcbcbc" /><path d="M0 5h2v9H0z" fill="#8ca08c" /></svg>
            Task Manager
          </TaskButton>
          <TaskButton $ls={-0.2}>
            <svg width="16" height="16" viewBox="0 0 16 16"><rect width="16" height="16" rx="1.500" fill="#2b5fb4" /><path d="M2 2h12v12H2z" fill="#e9f0fb" /><path d="M3.500 4.500l2 7.500L8 5.500l2.500 6.500 2-7.500" fill="none" stroke="#1d4e9e" strokeWidth="1.800" /></svg>
            Document1 - Micros...
          </TaskButton>
          <Tray>
            <Language>EN</Language>
            <svg width="15" height="16" viewBox="0 0 15 16"><circle cx="6" cy="10.500" r="3.800" fill="#dff1fc" stroke="#2e9be0" strokeWidth="2.500" /><path d="M8.500 0L14.500 10.500h-11z" fill="#f5b32a" /><path d="M8.800 3.500v3.600M8.800 8.300v1.300" stroke="#fff" strokeWidth="1.500" /></svg>
            <svg width="21" height="5" viewBox="0 0 21 5"><path d="M8 5h8l-4-4.500z" fill="#f3f3f3" /></svg>
            <svg width="26" height="18" viewBox="0 0 26 18"><g stroke="#3b3629" strokeWidth="3" fill="none"><path d="M15.500 3.500h6v12h-6zM17 2h3" /></g><path d="M15.500 3.500h6v12h-6z" fill="#3b3629" stroke="#fff" strokeWidth="1.300" /><path d="M17 1.500h3v2h-3zM17.300 5.300h2.400v8.400h-2.400z" fill="#fff" /><path d="M9 2v5M12 2v5M10.500 9v7" stroke="#fff" strokeWidth="1.400" /><path d="M8 6h5v3.500H8z" fill="#fff" /></svg>
            <svg width="22" height="14" viewBox="0 0 22 14" fill="#fff" stroke="#3b3629" strokeWidth=".6"><path d="M5.500 10.500H8V13H5.500zM8.500 8.500H11V13H8.500zM11.500 6H14v7h-2.500zM14.500 3.500H17V13h-2.500zM17.500 1H20v12h-2.500z" /></svg>
            <svg width="24" height="14" viewBox="0 0 24 14"><path d="M8 4.500h3L14.500 1v12L11 9.500H8z" fill="#fff" stroke="#3b3629" strokeWidth=".6" /><path d="M16.500 5c1 1 1 3 0 4M18.500 3c2 2 2 6 0 8M20.300 1.500c2.500 3 2.500 8 0 11" fill="none" stroke="#fff" strokeWidth="1.100" /></svg>
            <Clock>2:45 PM</Clock>
          </Tray>
        </Taskbar>
      </Screen>
    </>
  );
}
